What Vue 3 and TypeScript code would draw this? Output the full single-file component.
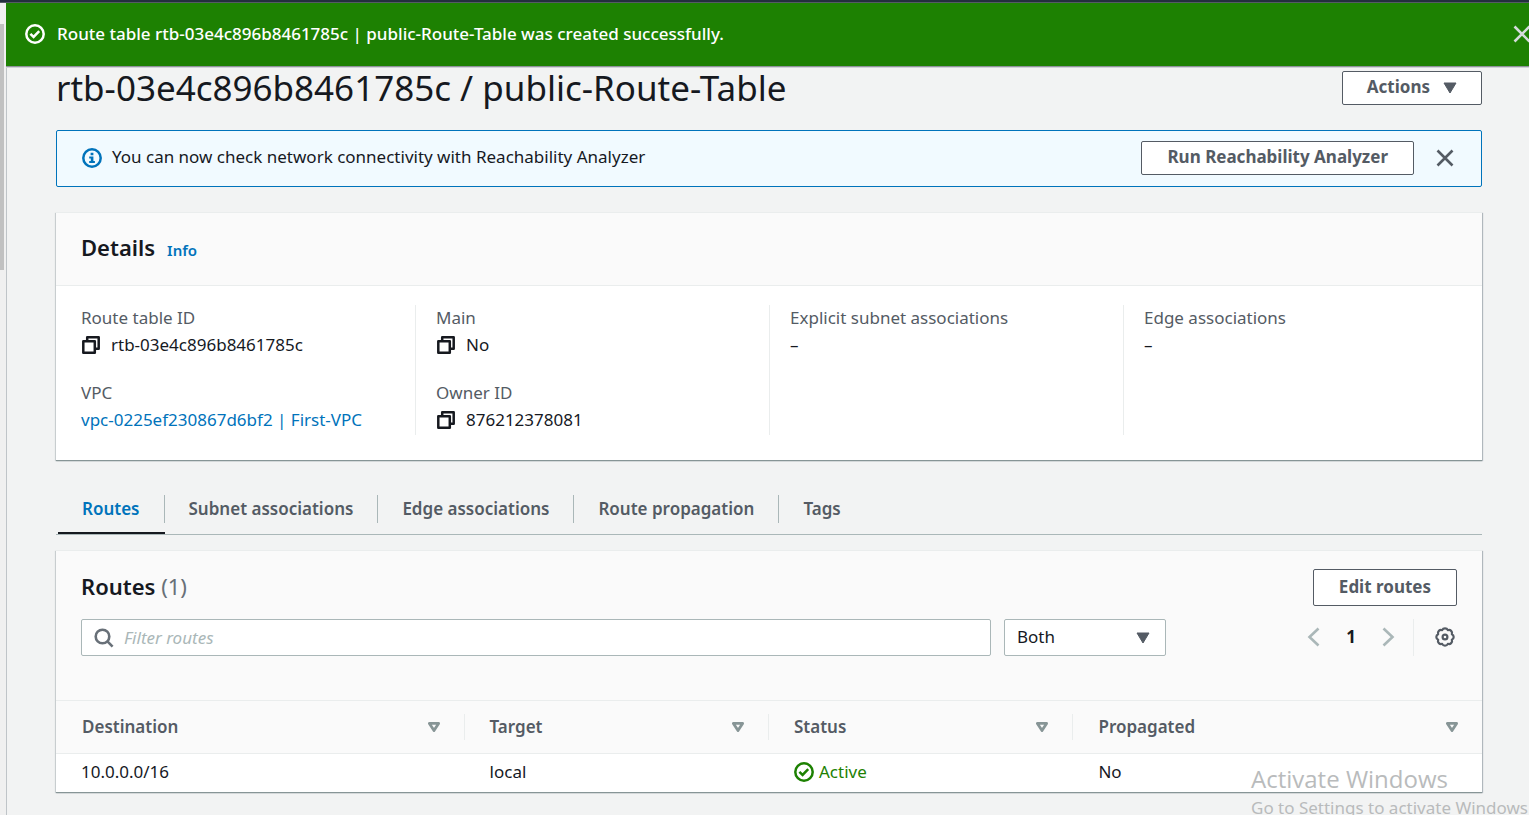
<script setup lang="ts">
import { ref } from 'vue'

interface Field {
  label: string
  value: string
  kind: 'copy' | 'link' | 'plain'
}

const groups: Field[][] = [
  [
    { label: 'Route table ID', value: 'rtb-03e4c896b8461785c', kind: 'copy' },
    { label: 'VPC', value: 'vpc-0225ef230867d6bf2 | First-VPC', kind: 'link' },
  ],
  [
    { label: 'Main', value: 'No', kind: 'copy' },
    { label: 'Owner ID', value: '876212378081', kind: 'copy' },
  ],
  [{ label: 'Explicit subnet associations', value: '–', kind: 'plain' }],
  [{ label: 'Edge associations', value: '–', kind: 'plain' }],
]

const tabs = ['Routes', 'Subnet associations', 'Edge associations', 'Route propagation', 'Tags']
const activeTab = ref('Routes')
const filter = ref('')
const scope = ref('Both')

const columns = [
  { name: 'Destination', cls: 'col-wide' },
  { name: 'Target', cls: 'col-narrow' },
  { name: 'Status', cls: 'col-narrow' },
  { name: 'Propagated', cls: 'col-wide' },
]
const routes = [{ destination: '10.0.0.0/16', target: 'local', status: 'Active', propagated: 'No' }]
</script>

<template>
  <div class="page">
    <div class="topbar"></div>
    <div class="shell">
      <div class="rail"><div class="thumb"></div></div>
      <div class="content">
        <div class="flash" role="status">
          <svg class="icon" viewBox="0 0 20 20" fill="none" stroke="currentColor" stroke-width="2.5">
            <circle cx="10" cy="10" r="8.7" />
            <path d="M5.4 9.8l3.2 3.1 5.6-5.7" />
          </svg>
          <p class="flash-text">Route table rtb-03e4c896b8461785c | public-Route-Table was created successfully.</p>
          <button class="icon-button flash-close" type="button" aria-label="Dismiss message">
            <svg class="icon" viewBox="0 0 20 20" fill="none" stroke="currentColor" stroke-width="2.6">
              <path d="M2.5 2.5l15 15M17.5 2.5l-15 15" />
            </svg>
          </button>
        </div>

        <main class="main">
          <header class="title-row">
            <h1>rtb-03e4c896b8461785c / public-Route-Table</h1>
            <button class="button actions" type="button">
              Actions
              <svg class="caret" viewBox="0 0 14 12"><path d="M1 1h12l-6 10z" fill="currentColor" stroke="currentColor" stroke-linejoin="round" /></svg>
            </button>
          </header>

          <section class="alert">
            <svg class="icon info" viewBox="0 0 20 20" fill="none" stroke="currentColor">
              <circle cx="10" cy="10" r="8.7" stroke-width="2.5" />
              <path d="M8.6 4.8h2.8v2.5H8.6zM7.2 8.4h4.2v4.6h1.5v2.1H7.2V13h1.6v-2.5H7.2z" fill="currentColor" stroke="none" />
            </svg>
            <p>You can now check network connectivity with Reachability Analyzer</p>
            <button class="button" type="button">Run Reachability Analyzer</button>
            <button class="icon-button" type="button" aria-label="Close">
              <svg class="icon" viewBox="0 0 20 20" fill="none" stroke="currentColor" stroke-width="2.6">
                <path d="M2.5 2.5l15 15M17.5 2.5l-15 15" />
              </svg>
            </button>
          </section>

          <section class="panel details">
            <header class="details-head">
              <h2>Details</h2>
              <a class="info-link" href="#">Info</a>
            </header>
            <div class="groups">
              <dl v-for="(group, i) in groups" :key="i" class="group">
                <div v-for="field in group" :key="field.label" class="field">
                  <dt>{{ field.label }}</dt>
                  <dd>
                    <button v-if="field.kind === 'copy'" class="copy" type="button" :aria-label="'Copy ' + field.label">
                      <svg viewBox="0 0 18 18" fill="none" stroke="currentColor" stroke-width="2.5" stroke-linejoin="round">
                        <path d="M1.3 5.2h11.5v11.5H1.3z" />
                        <path d="M5.2 5V1.3h11.5v11.5H13" />
                      </svg>
                    </button>
                    <a v-if="field.kind === 'link'" href="#">{{ field.value }}</a>
                    <span v-else>{{ field.value }}</span>
                  </dd>
                </div>
              </dl>
            </div>
          </section>

          <nav class="tabs" role="tablist">
            <button
              v-for="tab in tabs"
              :key="tab"
              class="tab"
              :class="{ active: tab === activeTab }"
              type="button"
              role="tab"
              :aria-selected="tab === activeTab"
              @click="activeTab = tab"
            >
              <span>{{ tab }}</span>
            </button>
          </nav>

          <section class="panel">
            <div class="tools">
              <div class="tools-row">
                <h2>Routes <span class="count">(1)</span></h2>
                <button class="button edit" type="button">Edit routes</button>
              </div>
              <div class="tools-row">
                <label class="search">
                  <svg class="icon" viewBox="0 0 20 20" fill="none" stroke="currentColor" stroke-width="2.6">
                    <circle cx="8.5" cy="8.5" r="6.8" />
                    <path d="M13.2 13.2l5.4 5.4" />
                  </svg>
                  <input v-model="filter" type="text" placeholder="Filter routes" aria-label="Filter routes" />
                </label>
                <div class="select">
                  <select v-model="scope" aria-label="Route scope">
                    <option>Both</option>
                  </select>
                  <svg class="caret" viewBox="0 0 14 12"><path d="M1 1h12l-6 10z" fill="currentColor" stroke="currentColor" stroke-linejoin="round" /></svg>
                </div>
                <div class="pager">
                  <button class="icon-button arrow" type="button" aria-label="Previous page">
                    <svg class="icon" viewBox="0 0 20 20" fill="none" stroke="currentColor" stroke-width="2.6"><path d="M14.5 1.5L5.5 10l9 8.5" /></svg>
                  </button>
                  <button class="page-number" type="button">1</button>
                  <button class="icon-button arrow" type="button" aria-label="Next page">
                    <svg class="icon" viewBox="0 0 20 20" fill="none" stroke="currentColor" stroke-width="2.6"><path d="M5.5 1.5l9 8.5-9 8.5" /></svg>
                  </button>
                </div>
                <div class="prefs">
                  <button class="icon-button" type="button" aria-label="Preferences">
                    <svg class="icon" viewBox="0 0 20 20" fill="none" stroke="currentColor" stroke-width="2.2" stroke-linejoin="round">
                      <path d="M7.17 3.16a3.1 3.1 0 0 1 5.66 0a3.1 3.1 0 0 1 4.01 4.01a3.1 3.1 0 0 1 0 5.66a3.1 3.1 0 0 1-4.01 4.01a3.1 3.1 0 0 1-5.66 0a3.1 3.1 0 0 1-4.01-4.01a3.1 3.1 0 0 1 0-5.66a3.1 3.1 0 0 1 4.01-4.01z" />
                      <circle cx="10" cy="10" r="2.4" />
                    </svg>
                  </button>
                </div>
              </div>
            </div>
            <table>
              <thead>
                <tr>
                  <th v-for="column in columns" :key="column.name" :class="column.cls" scope="col">
                    <div class="th-inner">
                      <span>{{ column.name }}</span>
                      <svg class="sort" viewBox="0 0 12 10" fill="none" stroke="currentColor" stroke-width="2.8" stroke-linejoin="round"><path d="M1.4 1.4h9.2L6 8.6z" /></svg>
                    </div>
                  </th>
                </tr>
              </thead>
              <tbody>
                <tr v-for="route in routes" :key="route.destination">
                  <td>{{ route.destination }}</td>
                  <td>{{ route.target }}</td>
                  <td>
                    <span class="status">
                      <svg class="icon" viewBox="0 0 20 20" fill="none" stroke="currentColor" stroke-width="2.5">
                        <circle cx="10" cy="10" r="8.7" />
                        <path d="M5.4 9.8l3.2 3.1 5.6-5.7" />
                      </svg>
                      {{ route.status }}
                    </span>
                  </td>
                  <td>{{ route.propagated }}</td>
                </tr>
              </tbody>
            </table>
          </section>
        </main>
      </div>
    </div>
    <aside class="watermark">
      <p class="watermark-title">Activate Windows</p>
      <p class="watermark-text">Go to Settings to activate Windows</p>
    </aside>
  </div>
</template>

<style>
body {
  margin: 0;
  background: #f2f3f3;
}
</style>

<style scoped>
* {
  box-sizing: border-box;
}
.page {
  position: relative;
  display: flex;
  flex-direction: column;
  min-height: 100vh;
  overflow: hidden;
  font: 17px/24px "Noto Sans", "Open Sans", sans-serif;
  color: #16191f;
}
h1, h2, p, dl, dd {
  margin: 0;
}
button, input, select {
  font: inherit;
  color: inherit;
}
button {
  cursor: pointer;
}
a {
  color: #0073bb;
  text-decoration: none;
}
svg {
  display: block;
  flex: none;
}
.topbar {
  height: 3px;
  background: #232f3e;
  border-bottom: 1px solid #545b64;
}
.shell {
  display: flex;
  flex: 1;
}
.rail {
  width: 6px;
  flex: none;
  padding-top: 21px;
  background: #f0f0f0;
}
.thumb {
  width: 4px;
  height: 246px;
  background: #c1c1c1;
}
.content {
  flex: 1;
  min-width: 0;
  border-left: 1px solid #bfc4c8;
}
.icon {
  width: 20px;
  height: 20px;
}
.icon-button {
  flex: none;
  padding: 0;
  border: 0;
  background: none;
  color: #545b64;
}
.flash {
  display: flex;
  align-items: center;
  height: 63px;
  margin-left: -1px;
  padding: 0 0 2px 19px;
  background: #1d8102;
  color: #fff;
  box-shadow: 0 1px 0 0 #8f939b, 0 2px 0 0 #d0d3d6;
}
.flash-text {
  flex: 1;
  padding-left: 12px;
  font-weight: 500;
  white-space: nowrap;
}
.flash-close {
  color: #d5dbdb;
  margin-right: -3px;
}
.main {
  padding: 4px 47px 22px 49px;
}
.title-row {
  display: flex;
  justify-content: space-between;
  align-items: center;
  height: 36px;
}
h1 {
  font-size: 35px;
  line-height: 36px;
  font-weight: 400;
  white-space: nowrap;
}
.button {
  display: flex;
  align-items: center;
  justify-content: center;
  gap: 13px;
  height: 34px;
  padding: 0 25px 2px;
  border: 1px solid #545b64;
  border-radius: 2px;
  background: #fff;
  color: #545b64;
  font-weight: 700;
  white-space: nowrap;
}
.caret {
  width: 14px;
  height: 12px;
  color: #545b64;
}
.actions {
  padding: 0 24px 2px;
}
.actions .caret {
  margin-top: 2px;
}
.alert {
  display: flex;
  align-items: center;
  height: 57px;
  margin-top: 24px;
  padding: 0 26px 2px 25px;
  border: 1px solid #0073bb;
  border-radius: 2px;
  background: #f1faff;
}
.alert .info {
  color: #0073bb;
}
.alert p {
  flex: 1;
  padding: 0 0 2px 10px;
}
.alert .button {
  margin-right: 21px;
}
.panel {
  background: #fff;
  border-top: 1px solid #eaeded;
  box-shadow: 0 1px 1px 0 #879596, 1px 1px 1px 0 #b8bfc4, -1px 1px 1px 0 #d5d9db;
}
.details {
  margin-top: 25px;
}
.details-head {
  display: flex;
  align-items: baseline;
  gap: 12px;
  padding: 18px 25px 22px;
  border-bottom: 1px solid #eaeded;
  background: #fafafa;
}
h2 {
  font-size: 22px;
  line-height: 32px;
  font-weight: 600;
}
.info-link {
  font-size: 15px;
  font-weight: 600;
}
.groups {
  display: grid;
  grid-template-columns: repeat(4, 1fr);
  padding: 19px 4px 25px 6px;
}
.group {
  display: flex;
  flex-direction: column;
  gap: 22px;
  min-height: 130px;
  padding-left: 20px;
  border-right: 1px solid #eaeded;
}
.group:first-child {
  padding-left: 19px;
}
.group:last-child {
  border-right: 0;
}
dt {
  padding-bottom: 1px;
  line-height: 26px;
  color: #545b64;
}
dd {
  display: flex;
  align-items: center;
  gap: 10px;
  line-height: 26px;
  white-space: nowrap;
}
.copy {
  padding: 0;
  border: 0;
  background: none;
}
.copy svg {
  width: 18px;
  height: 18px;
  margin: 1px;
}
.tabs {
  display: flex;
  height: 45px;
  margin-top: 30px;
  padding-left: 2px;
  border-bottom: 1px solid #aab7b8;
}
.tab {
  padding: 0 0 4px;
  border: 0;
  border-bottom: 2px solid transparent;
  background: none;
  color: #545b64;
  font-weight: 600;
}
.tab span {
  display: block;
  padding: 2px 24px;
  border-right: 1px solid #aab7b8;
}
.tab:last-child span {
  border-right: 0;
}
.tab.active {
  color: #0073bb;
  border-bottom-color: #16191f;
}
.tabs + .panel {
  margin-top: 15px;
}
.tools {
  display: flex;
  flex-direction: column;
  gap: 13px;
  padding: 18px 25px 44px;
  background: #fafafa;
}
.tools-row {
  display: flex;
  align-items: center;
}
.tools-row h2 {
  flex: 1;
  padding-bottom: 4px;
}
.count {
  color: #687078;
  font-weight: 400;
}
.edit {
  height: 37px;
}
.search {
  display: flex;
  align-items: center;
  flex: 1;
  max-width: 910px;
  height: 37px;
  padding-left: 12px;
  border: 1px solid #aab7b8;
  border-radius: 2px;
  background: #fff;
  color: #687078;
}
.search input {
  flex: 1;
  min-width: 0;
  padding: 0 10px;
  border: 0;
  outline: 0;
  background: none;
}
.search input::placeholder {
  color: #aab7b8;
  font-style: italic;
  opacity: 1;
}
.select {
  display: grid;
  align-items: center;
  width: 162px;
  height: 37px;
  margin-left: 13px;
}
.select > * {
  grid-area: 1 / 1;
}
.select select {
  width: 100%;
  height: 37px;
  padding: 0 12px 2px;
  border: 1px solid #aab7b8;
  border-radius: 2px;
  background: #fff;
  appearance: none;
}
.select .caret {
  justify-self: end;
  margin-right: 16px;
  pointer-events: none;
}
.pager {
  display: flex;
  align-items: center;
  gap: 16px;
  margin-left: auto;
  padding-bottom: 2px;
}
.arrow {
  color: #aab7b8;
}
.page-number {
  width: 22px;
  padding: 0;
  border: 0;
  background: none;
  font-weight: 700;
  text-align: center;
}
.prefs {
  display: flex;
  align-items: center;
  height: 37px;
  margin-left: 15px;
  padding: 0 2px 2px 21px;
  border-left: 1px solid #eaeded;
}
table {
  width: 100%;
  table-layout: fixed;
  border-collapse: collapse;
}
.col-wide {
  width: 28.65%;
}
.col-narrow {
  width: 21.35%;
}
th {
  height: 53px;
  padding: 0;
  border-top: 1px solid #eaeded;
  border-bottom: 1px solid #eaeded;
  background: #fafafa;
  color: #545b64;
  font-weight: 600;
  text-align: left;
}
.th-inner {
  display: flex;
  align-items: center;
  justify-content: space-between;
  height: 26px;
  padding: 0 24px 0 26px;
  border-right: 1px solid #eaeded;
}
th:last-child .th-inner {
  border-right: 0;
}
th + th .th-inner {
  padding-left: 25px;
}
.sort {
  width: 12px;
  height: 10px;
  color: #879596;
}
td {
  height: 38px;
  padding: 0 25px 2px;
}
.status {
  display: flex;
  align-items: center;
  gap: 5px;
  color: #1d8102;
}
.watermark {
  position: absolute;
  left: 1251px;
  top: 764px;
  color: #b9bbbc;
  white-space: nowrap;
  pointer-events: none;
}
.watermark-title {
  font: 24px/30px "Open Sans", sans-serif;
}
.watermark-text {
  font: 17px/28px "Noto Sans", sans-serif;
}
</style>
